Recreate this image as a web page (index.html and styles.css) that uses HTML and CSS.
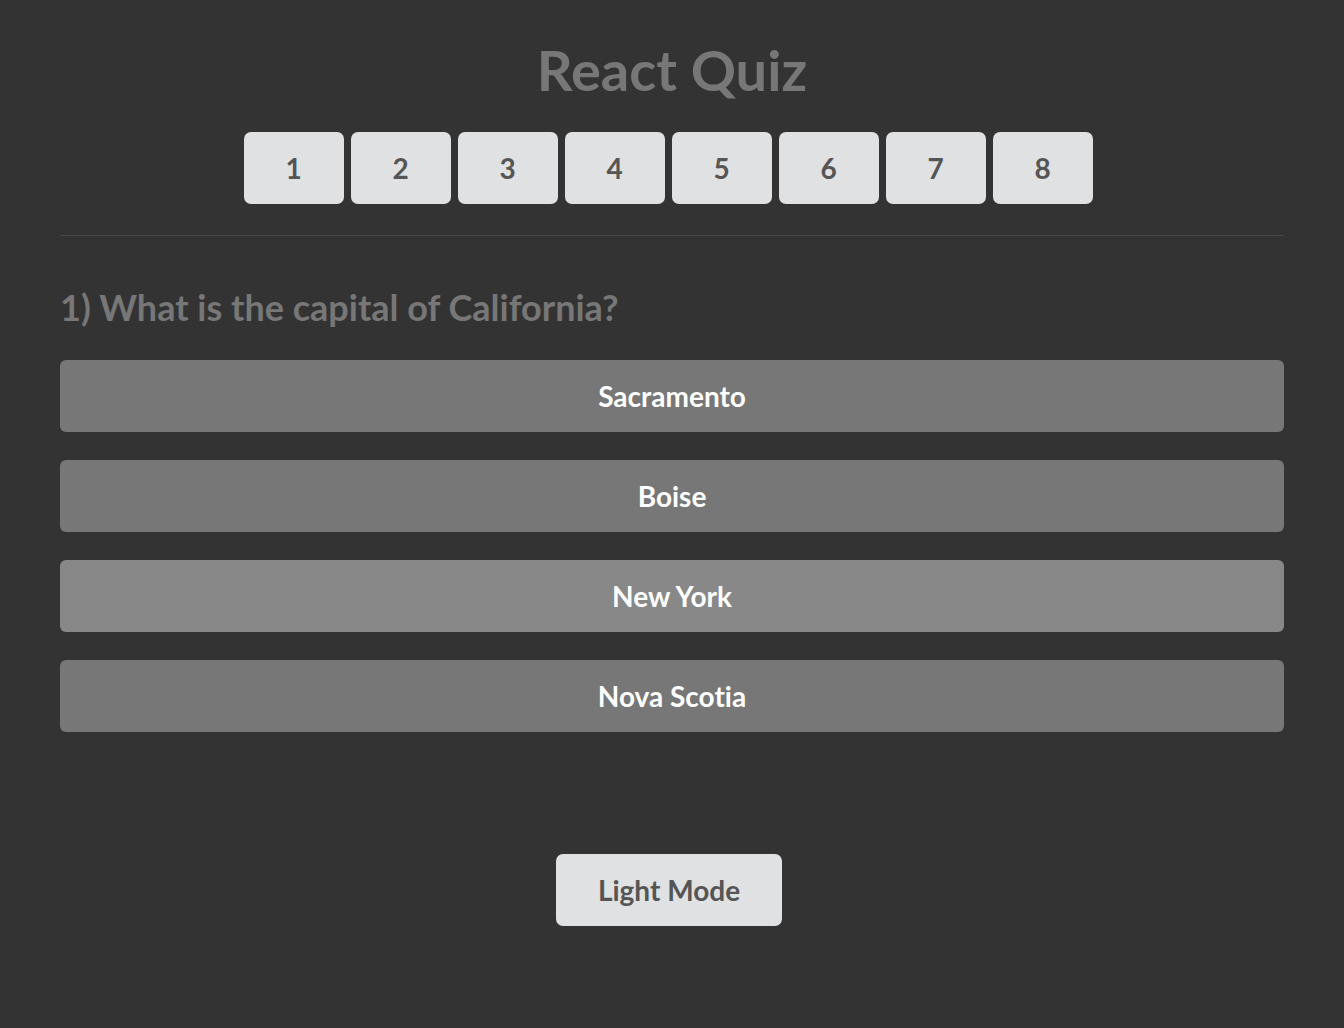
FILE: index.html
```html
<!DOCTYPE html>
<html lang="en">
<head>
<meta charset="utf-8">
<title>React Quiz</title>
<link rel="stylesheet" href="styles.css">
</head>
<body>
<div class="app">
  <h1 class="title">React Quiz</h1>
  <nav class="steps">
    <button class="step">1</button>
    <button class="step">2</button>
    <button class="step">3</button>
    <button class="step">4</button>
    <button class="step">5</button>
    <button class="step">6</button>
    <button class="step">7</button>
    <button class="step">8</button>
  </nav>
  <hr class="divider">
  <h2 class="question">1) What is the capital of California?</h2>
  <div class="answers">
    <button class="answer">Sacramento</button>
    <button class="answer">Boise</button>
    <button class="answer answer-hover">New York</button>
    <button class="answer">Nova Scotia</button>
  </div>
  <div class="footer">
    <button class="mode">Light Mode</button>
  </div>
</div>
</body>
</html>
```
FILE: styles.css
```css
html, body {
  margin: 0;
  padding: 0;
  background: #333333;
  font-family: Lato, "Open Sans", sans-serif;
  font-variant-ligatures: no-common-ligatures;
}
.app {
  padding: 0 60px;
  display: flex;
  flex-direction: column;
}
.title {
  margin: 35px 0 0;
  text-align: center;
  font-size: 56px;
  line-height: 70px;
  font-weight: 700;
  color: #777777;
}
.steps {
  margin-top: 27px;
  display: flex;
  justify-content: center;
  gap: 7px;
  padding-right: 8px;
}
.step {
  width: 100px;
  height: 72px;
  border: none;
  border-radius: 7px;
  background: #e0e1e3;
  color: #555555;
  font-family: Lato, sans-serif;
  font-variant-ligatures: no-common-ligatures;
  font-weight: 700;
  font-size: 28px;
  padding: 0;
}
.divider {
  margin: 31px 0 0;
  border: none;
  border-top: 1px solid #474747;
  height: 0;
}
.question {
  margin: 49px 0 0;
  font-size: 36px;
  line-height: 44px;
  font-weight: 700;
  color: #777777;
}
.answers {
  margin-top: 31px;
  display: flex;
  flex-direction: column;
  gap: 28px;
}
.answer {
  height: 72px;
  border: none;
  border-radius: 6px;
  background: #777777;
  color: #ffffff;
  font-family: Lato, sans-serif;
  font-variant-ligatures: no-common-ligatures;
  font-weight: 700;
  font-size: 28px;
  padding: 0;
}
.answer-hover {
  background: #888888;
}
.footer {
  margin-top: 122px;
  display: flex;
  justify-content: center;
  padding-right: 6px;
}
.mode {
  width: 226px;
  height: 72px;
  border: none;
  border-radius: 7px;
  background: #e0e1e3;
  color: #555555;
  font-family: Lato, sans-serif;
  font-variant-ligatures: no-common-ligatures;
  font-weight: 700;
  font-size: 28px;
  padding: 0;
}
```
